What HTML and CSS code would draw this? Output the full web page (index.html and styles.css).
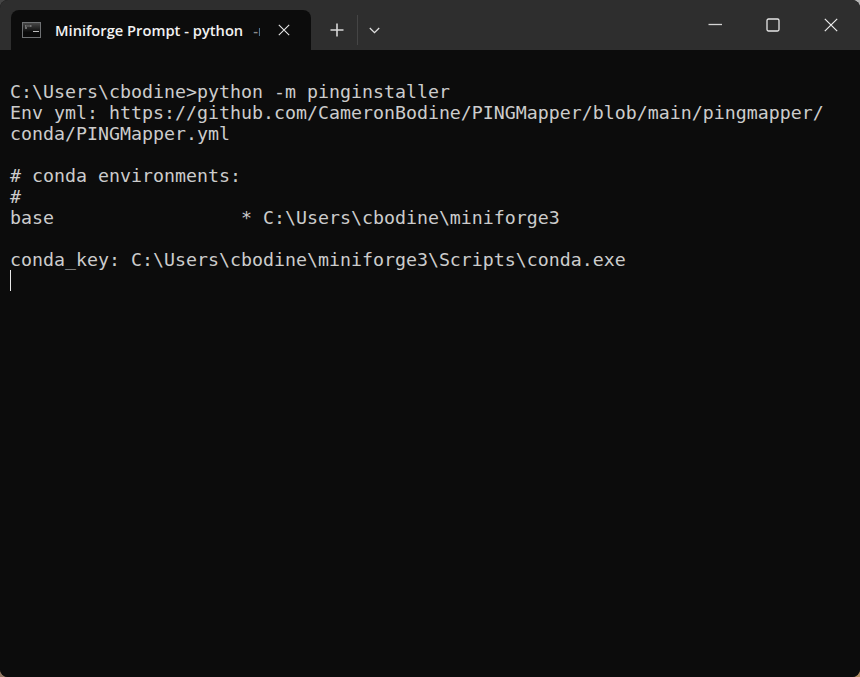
FILE: index.html
```html
<!DOCTYPE html>
<html lang="en">
<head>
<meta charset="utf-8">
<title>Miniforge Prompt</title>
<link rel="stylesheet" href="styles.css">
</head>
<body>
<div class="window">
  <header class="titlebar">
    <div class="tab">
      <svg class="tab-icon" width="19" height="16" viewBox="0 0 19 16">
        <defs><linearGradient id="screen" x1="0" y1="0" x2="0" y2="1"><stop offset="0" stop-color="#4a4a4a"/><stop offset="0.65" stop-color="#0a0a0a"/></linearGradient></defs>
        <rect x="0.5" y="0.5" width="18" height="15" fill="url(#screen)" stroke="#6f7173"/>
        <path d="M3 4h1.5M5.5 4h1M7.5 4h2M3 6h2" stroke="#b4b4b4" stroke-width="1"/>
        <path d="M11 9.5h6" stroke="#bdbdbd" stroke-width="1"/>
      </svg>
      <div class="tab-title"><span>Miniforge Prompt - python</span><span class="tab-rest">-m pinginstaller</span></div>
      <svg class="tab-close" width="12" height="12" viewBox="0 0 12 12"><path d="M.8.8l10.4 10.4M11.2.8L.8 11.2" stroke="#e6e6e6" stroke-width="1.1" fill="none"/></svg>
    </div>
    <button class="tool new-tab"><svg width="14" height="14" viewBox="0 0 14 14"><path d="M7 .5v13M.5 7h13" stroke="#d8d8d8" stroke-width="1.6" fill="none"/></svg></button>
    <span class="divider"></span>
    <button class="tool dropdown"><svg width="11" height="7" viewBox="0 0 11 7"><path d="M.8 1l4.7 4.7L10.2 1" stroke="#e0e0e0" stroke-width="1.3" fill="none"/></svg></button>
    <div class="controls">
      <button class="ctl"><svg width="14" height="14" viewBox="0 0 14 14"><path d="M.5 6.5h13.5" stroke="#d4d4d4" stroke-width="1.3"/></svg></button>
      <button class="ctl"><svg width="14" height="14" viewBox="0 0 14 14"><rect x="1" y="1" width="12" height="12" rx="1.5" fill="none" stroke="#e6e6e6" stroke-width="1.3"/></svg></button>
      <button class="ctl"><svg width="14" height="14" viewBox="0 0 14 14"><path d="M.8.8l12.4 12.4M13.2.8L.8 13.2" stroke="#ececec" stroke-width="1.2" fill="none"/></svg></button>
    </div>
  </header>
  <main class="terminal">
<pre class="output">

C:\Users\cbodine&gt;python -m pinginstaller
Env yml: https://github.com/CameronBodine/PINGMapper/blob/main/pingmapper/
conda/PINGMapper.yml

# conda environments:
#
base                 * C:\Users\cbodine\miniforge3

conda_key: C:\Users\cbodine\miniforge3\Scripts\conda.exe
<span class="cursor"></span></pre>
  </main>
</div>
</body>
</html>
```

FILE: styles.css
```css
* { box-sizing: border-box; }
html, body { margin: 0; height: 100%; overflow: hidden; }
body { background: conic-gradient(#b4b4b4 0 25%, #b08c62 25% 50%, #8f7560 50% 75%, #454545 75%); }
.window {
  display: flex;
  flex-direction: column;
  height: 677px;
  background: #0c0c0c;
  border-radius: 8px;
  overflow: hidden;
}
.titlebar {
  display: flex;
  align-items: flex-end;
  height: 50px;
  flex: none;
  background: #2e2e2e;
  padding-left: 11px;
}
.tab {
  display: flex;
  align-items: center;
  width: 300px;
  height: 40px;
  background: #0c0c0c;
  border-radius: 8px 8px 0 0;
  padding-left: 11px;
  color: #f2f2f2;
}
.tab-icon { flex: none; margin-top: -1px; }
.tab-title {
  flex: none;
  width: 205px;
  margin-left: 14px;
  display: flex;
  gap: 10px;
  overflow: hidden;
  white-space: nowrap;
  font: 600 14.7px/20px "Open Sans", "Noto Sans", sans-serif;
}
.tab-rest { color: #8a8a8a; font-weight: 600; }
.tab-close { flex: none; margin-left: 18px; margin-top: -1px; }
.tool {
  display: flex;
  align-items: center;
  justify-content: center;
  border: 0;
  padding: 0;
  background: none;
  height: 40px;
}
.new-tab { width: 46px; padding-left: 6px; }
.dropdown { width: 33px; }
.divider { width: 1px; height: 30px; margin-bottom: 5px; background: #454545; }
.controls { display: flex; margin-left: auto; align-self: flex-start; }
.ctl {
  display: flex;
  align-items: center;
  justify-content: center;
  width: 58px;
  height: 49px;
  border: 0;
  padding: 0;
  background: none;
}
.terminal { flex: 1; padding: 10px 10px 0; background: #0c0c0c; }
.output {
  margin: 0;
  color: #cccccc;
  font: 18.27px/21px "DejaVu Sans Mono", "Liberation Mono", monospace;
}
.cursor {
  display: inline-block;
  width: 1px;
  height: 21px;
  background: #e8e8e8;
  vertical-align: top;
}
```
